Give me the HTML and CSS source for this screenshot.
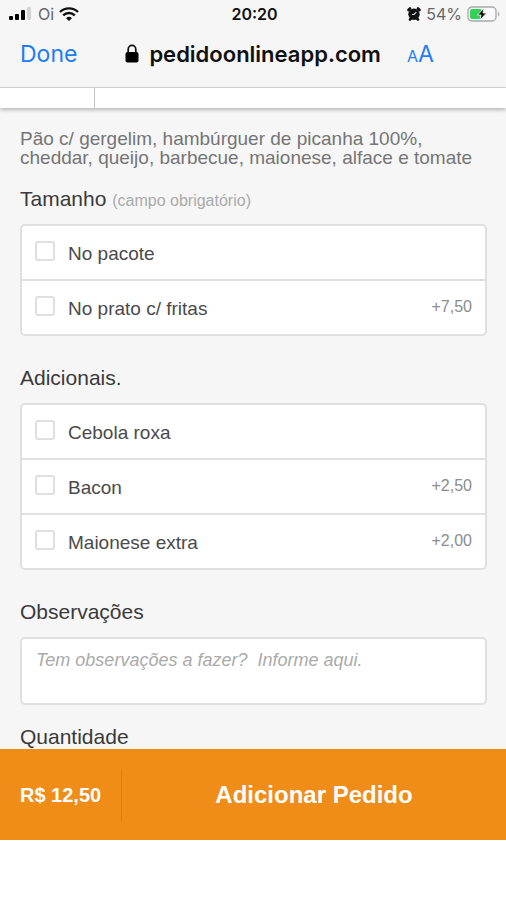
FILE: index.html
```html
<!DOCTYPE html>
<html lang="pt-BR">
<head>
<meta charset="utf-8">
<meta name="viewport" content="width=device-width, initial-scale=1">
<title>Pedido Online</title>
<link rel="stylesheet" href="styles.css">
</head>
<body>
<div class="screen">
  <header class="browser">
    <div class="status">
      <div class="status-left">
        <svg class="signal" width="24" height="14" viewBox="0 0 24 14" aria-hidden="true">
          <rect x="0" y="9" width="4" height="4" rx="1"/><rect x="6" y="7" width="4" height="6" rx="1"/><rect x="12" y="3" width="4" height="10" rx="1"/><rect x="18" y="0" width="4" height="13" rx="1" fill="#d4d4d4"/>
        </svg>
        <span class="carrier">Oi</span>
        <svg width="20" height="14" viewBox="0 0 20 14" fill="none" stroke="#111" stroke-width="2.4" aria-hidden="true">
          <path d="M1 5a13 13 0 0 1 18 0M4.2 8.3a8.3 8.3 0 0 1 11.6 0"/><path d="M7 11.2a4.4 4.4 0 0 1 6 0L10 14z" fill="#111" stroke="none"/>
        </svg>
      </div>
      <span class="clock">20:20</span>
      <div class="status-right">
        <svg width="14" height="14" viewBox="0 0 14 14" aria-hidden="true">
          <path d="M1.500 3 3 1.500M12.500 3 11 1.500M3 12.500 4 11.500M11 12.500 10 11.500" stroke="#111" stroke-width="2.600" stroke-linecap="round"/><circle cx="7" cy="7.200" r="5.700" fill="#111"/><path d="M7 7.500 9.300 5.200M7 7.500H5" stroke="#ddd" stroke-width="1.100" fill="none"/>
        </svg>
        <span class="charge">54%</span>
        <svg width="33" height="16" viewBox="0 0 33 16" aria-hidden="true">
          <rect x="1" y="1" width="28" height="14" rx="4" fill="#fafafa" stroke="#a8a8a8" stroke-width="1.300"/><path d="M5 3h9v10H5a2 2 0 0 1-2-2V5a2 2 0 0 1 2-2z" fill="#32d158"/><path d="M31 5.500c1.600.5 1.600 4.500 0 5z" fill="#a8a8a8"/><path d="M17 2 10.500 9H14l-1 5 6.500-7H16z" fill="#111" stroke="#fafafa" stroke-width=".8"/>
        </svg>
      </div>
    </div>
    <div class="address">
      <button class="done" type="button">Done</button>
      <div class="site">
        <svg width="14" height="19" viewBox="0 0 14 19" aria-hidden="true"><rect x="0.500" y="8" width="13" height="10.500" rx="2"/><path d="M3.200 9V5.200a3.800 3.800 0 0 1 7.600 0V9" fill="none" stroke="#111" stroke-width="1.700"/></svg>
        <span>pedidoonlineapp.com</span>
      </div>
      <button class="text-size" type="button" aria-label="AA"><span class="small-a">A</span>A</button>
    </div>
  </header>
  <div class="tabs"><div class="tab"></div></div>
  <main class="content">
    <p class="description">Pão c/ gergelim, hambúrguer de picanha 100%, cheddar, queijo, barbecue, maionese, alface e tomate</p>
    <section>
      <h2>Tamanho <small>(campo obrigatório)</small></h2>
      <div class="options">
        <label class="option"><input type="checkbox"><span class="name">No pacote</span></label>
        <label class="option"><input type="checkbox"><span class="name">No prato c/ fritas</span><span class="extra">+7,50</span></label>
      </div>
    </section>
    <section>
      <h2>Adicionais.</h2>
      <div class="options">
        <label class="option"><input type="checkbox"><span class="name">Cebola roxa</span></label>
        <label class="option"><input type="checkbox"><span class="name">Bacon</span><span class="extra">+2,50</span></label>
        <label class="option"><input type="checkbox"><span class="name">Maionese extra</span><span class="extra">+2,00</span></label>
      </div>
    </section>
    <section class="notes">
      <h2><label for="notes">Observações</label></h2>
      <textarea id="notes" placeholder="Tem observações a fazer?  Informe aqui."></textarea>
    </section>
    <section>
      <h2>Quantidade</h2>
    </section>
  </main>
  <footer class="order">
    <span class="total">R$ 12,50</span>
    <button class="add" type="button">Adicionar Pedido</button>
  </footer>
</div>
</body>
</html>
```
FILE: styles.css
```css
* {
  box-sizing: border-box;
}

body {
  margin: 0;
  background: #fff;
  color: #3a3a3a;
  font-family: "Liberation Sans", Arial, sans-serif;
}

button {
  padding: 0;
  border: 0;
  background: none;
  font: inherit;
}

svg {
  display: block;
  flex: none;
}

.screen {
  display: flex;
  flex-direction: column;
  height: 100vh;
  padding-bottom: 60px;
}

.browser {
  flex: none;
  background: #f6f6f6;
  border-bottom: 1px solid #d4d4d4;
  font-family: Inter, "Liberation Sans", sans-serif;
}

.status {
  display: grid;
  grid-template-columns: 1fr auto 1fr;
  align-items: center;
  height: 28px;
  padding: 0 6px 0 9px;
  font-size: 16px;
}

.status-left,
.status-right {
  display: flex;
  align-items: center;
  gap: 5px;
}

.status-right {
  justify-content: flex-end;
}

.carrier,
.charge {
  color: #666;
}

.clock {
  color: #111;
  font-weight: 600;
}

.address {
  display: flex;
  align-items: center;
  height: 59px;
  padding: 0 20px 8px;
}

.done,
.text-size {
  color: #1e7cf5;
  font-size: 23px;
}

.site {
  display: flex;
  align-items: center;
  gap: 10px;
  margin: 0 26px 0 48px;
  color: #111;
  font-size: 22px;
  font-weight: 600;
}

.small-a {
  font-size: 16px;
}

.tabs {
  position: relative;
  flex: none;
  height: 20px;
  background: #fff;
  box-shadow: 0 2px 4px rgba(0, 0, 0, 0.25);
}

.tab {
  width: 95px;
  height: 100%;
  border-right: 1px solid #c4c4c4;
}

.content {
  flex: 1;
  min-height: 0;
  overflow: hidden;
  padding: 21px 19px 0 20px;
  background: #f6f6f6;
}

.description {
  margin: 0 0 20px;
  color: #757575;
  font-size: 19px;
  line-height: 19px;
}

section {
  margin-bottom: 30px;
}

.notes {
  margin-bottom: 20px;
}

h2 {
  margin: 0 0 13px;
  font-size: 21px;
  font-weight: 400;
  line-height: 24px;
}

h2 small {
  color: #aaa;
  font-size: 16px;
  line-height: 16px;
}

.options,
textarea {
  border: 2px solid #e0e0e0;
  border-radius: 5px;
  background: #fff;
}

.option {
  display: flex;
  align-items: center;
  height: 53px;
  padding: 0 13px;
}

.option + .option {
  height: 55px;
  border-top: 2px solid #e0e0e0;
}

.option input {
  appearance: none;
  width: 20px;
  height: 20px;
  margin: 0 13px 4px 0;
  border: 2px solid #e0e0e0;
  border-radius: 3px;
  background: #fff;
}

.option input:checked {
  background: #f08c18;
}

.name {
  flex: 1;
  padding-top: 3px;
  color: #4a4a4a;
  font-size: 19px;
}

.extra {
  padding-bottom: 2px;
  color: #8c8c8c;
  font-size: 16px;
}

textarea {
  display: block;
  width: 100%;
  height: 68px;
  padding: 10px 14px;
  resize: none;
  color: #444;
  font: italic 18px/22px "Liberation Sans", Arial, sans-serif;
}

textarea::placeholder {
  color: #aaa;
}

.order {
  display: flex;
  align-items: center;
  flex: none;
  height: 91px;
  background: #f08c18;
  color: #fff;
  font-weight: 700;
}

.total {
  width: 122px;
  padding-left: 20px;
  border-right: 1px solid #df7f12;
  font-size: 20px;
  line-height: 52px;
}

.add {
  flex: 1;
  align-self: stretch;
  color: #fff;
  font-size: 24px;
}
```
